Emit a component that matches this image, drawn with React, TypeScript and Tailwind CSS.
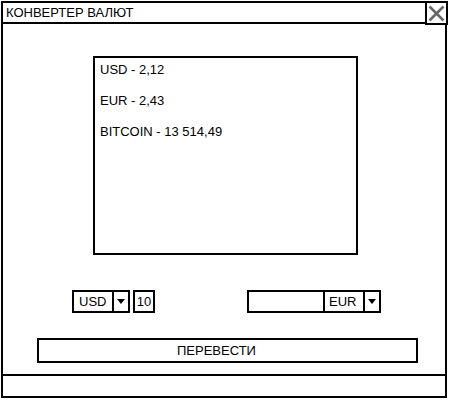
import React from "react";

function Arrow() {
  return (
    <div className="w-[18px] h-[23px] border-2 border-black -ml-[2px] flex items-center justify-center bg-white">
      <svg width="8" height="5" viewBox="0 0 8 5">
        <polygon points="0,0 8,0 4,5" fill="#000" />
      </svg>
    </div>
  );
}

export default function App() {
  return (
    <div
      className="w-[450px] h-[400px] bg-white text-black text-[13px] leading-none overflow-hidden"
      style={{ fontFamily: '"Liberation Sans", Arial, sans-serif' }}
    >
      <div className="relative ml-[1px] mt-[1px] w-[446px] h-[397px] border-2 border-black flex flex-col">
        <div className="h-[21px] border-b-2 border-black flex items-center pl-[3px] shrink-0">
          <span>КОНВЕРТЕР ВАЛЮТ</span>
        </div>
        <div className="absolute -top-[2px] -right-[3px] w-[23px] h-[24px] border-2 border-black bg-white flex items-center justify-center">
          <svg width="17" height="17" viewBox="0 0 17 17">
            <line x1="1.5" y1="1.5" x2="15.5" y2="15.5" stroke="#666" strokeWidth="2.5" />
            <line x1="15.5" y1="1.5" x2="1.5" y2="15.5" stroke="#666" strokeWidth="2.5" />
          </svg>
        </div>

        <div className="ml-[90px] mt-[32px] w-[265px] h-[199px] border-2 border-black flex flex-col gap-[18px] pl-[5px] pt-[5px]">
          <div>USD - 2,12</div>
          <div>EUR - 2,43</div>
          <div>BITCOIN - 13 514,49</div>
        </div>

        <div className="flex mt-[35px] h-[23px]">
          <div className="ml-[69px] flex">
            <div className="w-[42px] h-[23px] border-2 border-black flex items-center pl-[5px]">USD</div>
            <Arrow />
            <div className="ml-[3px] w-[22px] h-[23px] border-2 border-black flex items-center justify-center">10</div>
          </div>
          <div className="ml-[92px] flex">
            <div className="w-[78px] h-[23px] border-2 border-black"></div>
            <div className="-ml-[2px] w-[42px] h-[23px] border-2 border-black flex items-center pl-[4px]">EUR</div>
            <Arrow />
          </div>
        </div>

        <div className="ml-[34px] mt-[25px] w-[381px] h-[25px] border-2 border-black flex items-center justify-center pr-[22px]">
          ПЕРЕВЕСТИ
        </div>

        <div className="mt-auto h-[22px] border-t-2 border-black"></div>
      </div>
    </div>
  );
}
